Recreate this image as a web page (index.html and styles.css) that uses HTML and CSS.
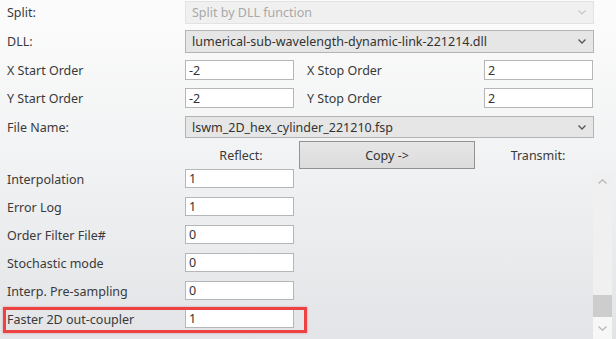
FILE: index.html
```html
<!DOCTYPE html>
<html lang="en">
<head>
    <meta charset="UTF-8">
    <title>Grating Order Settings</title>
    <link rel="stylesheet" href="styles.css">
</head>
<body>
    <div class="panel">
        <div class="row r-split">
            <label class="lbl">Split:</label>
            <div class="combo disabled">Split by DLL function
                <svg class="arrow" width="8" height="5" viewBox="0 0 8 5"><path d="M0.5 0.5 L4 4 L7.5 0.5" fill="none" stroke="#c6c6c6" stroke-width="1.2"/></svg>
            </div>
        </div>
        <div class="row r-dll">
            <label class="lbl">DLL:</label>
            <div class="combo">lumerical-sub-wavelength-dynamic-link-221214.dll
                <svg class="arrow" width="8" height="5" viewBox="0 0 8 5"><path d="M0.5 0.5 L4 4 L7.5 0.5" fill="none" stroke="#555" stroke-width="1.3"/></svg>
            </div>
        </div>
        <div class="row r-order">
            <label class="lbl">X Start Order</label>
            <input class="field" value="-2">
            <label class="lbl2">X Stop Order</label>
            <input class="field" value="2">
        </div>
        <div class="row r-order">
            <label class="lbl">Y Start Order</label>
            <input class="field" value="-2">
            <label class="lbl2">Y Stop Order</label>
            <input class="field" value="2">
        </div>
        <div class="row r-file">
            <label class="lbl">File Name:</label>
            <div class="combo">lswm_2D_hex_cylinder_221210.fsp
                <svg class="arrow" width="8" height="5" viewBox="0 0 8 5"><path d="M0.5 0.5 L4 4 L7.5 0.5" fill="none" stroke="#555" stroke-width="1.3"/></svg>
            </div>
        </div>
        <div class="row r-copy">
            <span class="side">Reflect:</span>
            <button class="copy">Copy -&gt;</button>
            <span class="side">Transmit:</span>
        </div>

        <div class="scroller">
            <div class="list">
                <div class="row item"><label class="lbl">Interpolation</label><input class="field" value="1"></div>
                <div class="row item"><label class="lbl">Error Log</label><input class="field" value="1"></div>
                <div class="row item"><label class="lbl">Order Filter File#</label><input class="field" value="0"></div>
                <div class="row item"><label class="lbl">Stochastic mode</label><input class="field" value="0"></div>
                <div class="row item"><label class="lbl">Interp. Pre-sampling</label><input class="field" value="0"></div>
                <div class="row item hl"><label class="lbl">Faster 2D out-coupler</label><input class="field" value="1"></div>
            </div>
            <div class="vbar">
                <span class="btn">
                    <svg width="9" height="5" viewBox="0 0 9 5"><path d="M0.5 4.5 L4.5 0.8 L8.5 4.5" fill="none" stroke="#b8b8b8" stroke-width="1.3"/></svg>
                </span>
                <span class="track"></span>
                <span class="thumb"></span>
                <span class="btn down">
                    <svg width="9" height="5" viewBox="0 0 9 5"><path d="M0.5 0.5 L4.5 4.2 L8.5 0.5" fill="none" stroke="#b8b8b8" stroke-width="1.3"/></svg>
                </span>
            </div>
        </div>
    </div>
</body>
</html>
```

FILE: styles.css
```css
html, body { margin: 0; height: 100%; }
body { font-family: "Noto Sans", "Open Sans", sans-serif; font-size: 12.5px; color: #3a3a3a; background: linear-gradient(to bottom, #fcfcfc 0%, #f2f3f4 45%, #e2e4e7 100%); overflow: hidden; }
.panel { width: 616px; height: 339px; padding-top: 1px; box-sizing: border-box; }
.row { display: flex; align-items: center; }
.lbl { width: 178px; padding-left: 7px; flex: none; }
.lbl2 { width: 177px; padding-left: 13px; flex: none; }
.r-split { height: 23px; margin-bottom: 6px; }
.r-dll { height: 23px; margin-bottom: 7px; }
.r-order { height: 20px; margin-bottom: 8px; }
.r-file { height: 22px; margin-bottom: 3px; }
.r-copy { height: 28px; }
.combo { position: relative; width: 409px; height: 100%; box-sizing: border-box; border: 1px solid #b4b4b4; background: #e6e6e6; padding-left: 6px; display: flex; align-items: center; color: #333; }
.combo.disabled { background: #f0f0f0; border-color: #e2e2e2; color: #a9a9a9; }
.arrow { position: absolute; right: 7px; top: 8px; }
.field { width: 109px; height: 20px; box-sizing: border-box; border: 1px solid #b6b6b6; background: #fff; font: inherit; color: #333; padding: 0 0 0 3px; margin: 0; }
.side { width: 116px; text-align: center; flex: none; }
.r-copy .side:first-child { margin-left: 183px; }
.r-copy .side:last-child { margin-left: 3px; width: 120px; }
.copy { width: 176px; height: 28px; margin: 0; border: 1px solid #939393; background: linear-gradient(#e6e6e6, #dcdcdc); font: inherit; color: #333; padding: 0; }
.scroller { display: flex; height: 170px; }
.list { width: 593px; }
.item { height: 19px; margin-bottom: 9px; }
.item .lbl { padding-top: 2px; }
.item .field { height: 19px; }
.hl { position: relative; }
.hl::before { content: ""; position: absolute; left: 3px; top: -2px; width: 298px; height: 20px; border: 3px solid #ee4242; box-shadow: 0 0 2px rgba(200, 40, 40, 0.4); }
.vbar { width: 19px; margin-top: 4px; background: #f0f0f0; display: flex; flex-direction: column; }
.btn { height: 17px; display: flex; align-items: center; justify-content: center; }
.track { flex: 1; }
.thumb { height: 22px; background: #cdcdcd; }
.btn.down { height: 22px; background: #f7f7f7; }
```
